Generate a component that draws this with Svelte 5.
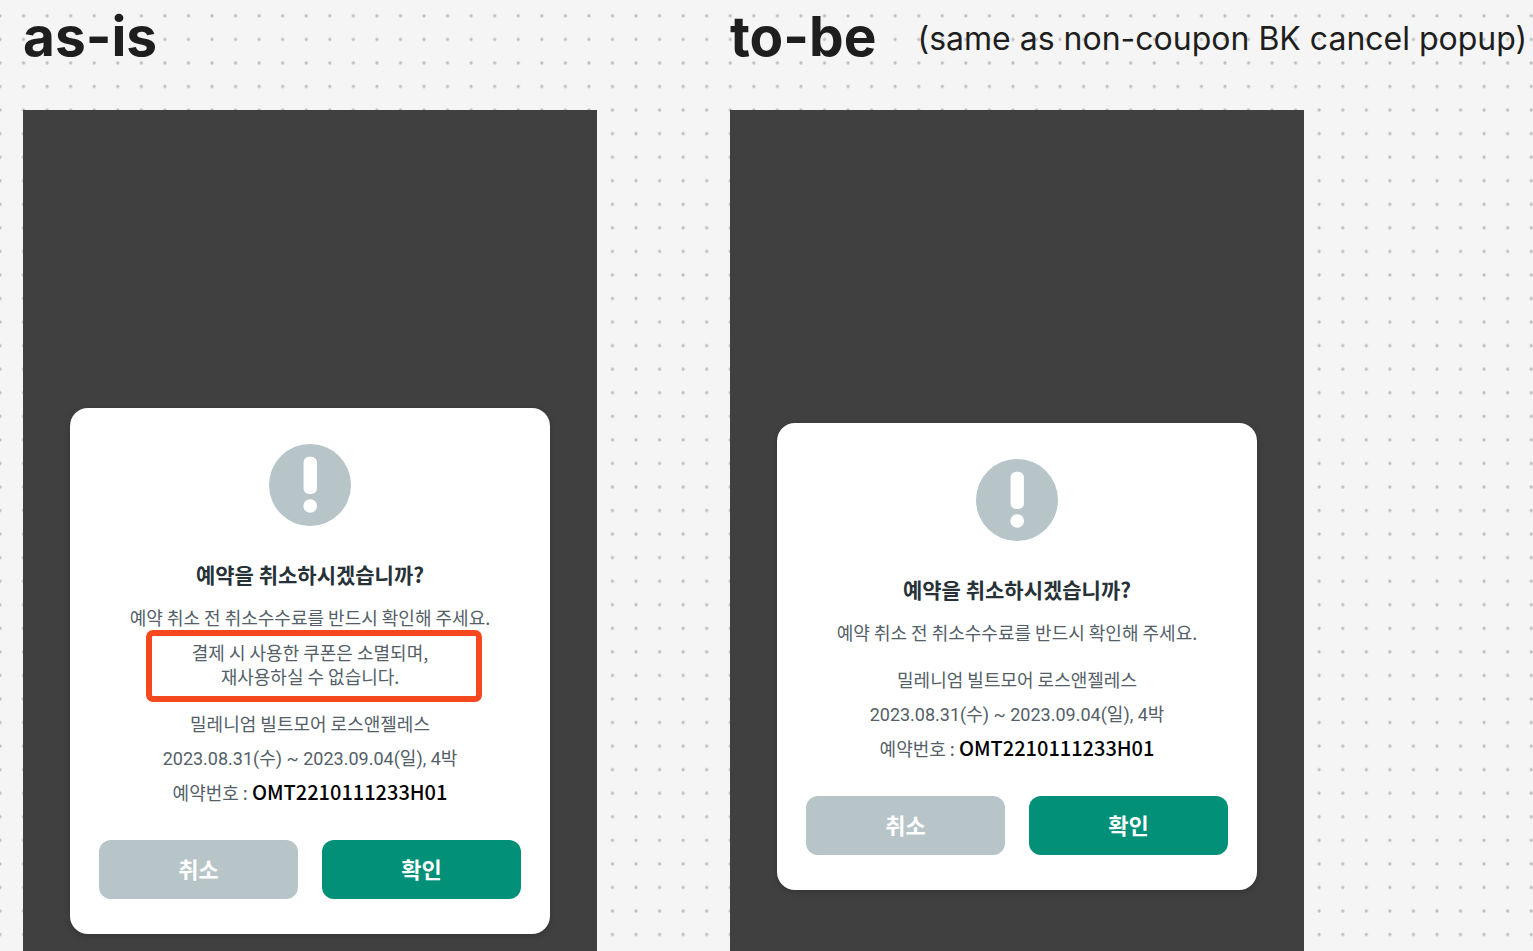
<script>
  const columns = [
    { id: 'as-is', title: 'as-is', note: '', coupon: true },
    { id: 'to-be', title: 'to-be', note: '(same as non-coupon BK cancel popup)', coupon: false },
  ];
</script>

<div class="board">
  <svg class="dots" aria-hidden="true">
    <defs>
      <pattern id="dot-grid" x="-11.78" y="4.05" width="23.557" height="23.557" patternUnits="userSpaceOnUse">
        <circle cx="11.78" cy="11.78" r="1.6" fill="#bdbdbd" />
      </pattern>
    </defs>
    <rect width="100%" height="100%" fill="url(#dot-grid)" />
  </svg>

  <main class="columns">
    {#each columns as col (col.id)}
      <section class="column" aria-labelledby={col.id}>
        <header>
          <h1 id={col.id}>{col.title}</h1>
          {#if col.note}<p class="note">{col.note}</p>{/if}
        </header>
        <div class="screen" class:tall={col.coupon}>
          <div class="dialog" role="alertdialog" aria-labelledby="{col.id}-question">
            <svg class="alert" viewBox="0 0 83 83" aria-hidden="true">
              <circle cx="41.5" cy="41.5" r="41.5" fill="#b7c4c8" />
              <rect x="35" y="13" width="13.5" height="37.5" rx="5.5" fill="#fff" />
              <circle cx="41.7" cy="62.7" r="6.9" fill="#fff" />
            </svg>
            <h2 id="{col.id}-question">예약을 취소하시겠습니까?</h2>
            <p class="desc">예약 취소 전 취소수수료를 반드시 확인해 주세요.</p>
            {#if col.coupon}
              <p class="coupon">결제 시 사용한 쿠폰은 소멸되며,<br />재사용하실 수 없습니다.<span class="marker"></span></p>
            {/if}
            <div class="booking">
              <p>밀레니엄 빌트모어 로스앤젤레스</p>
              <p class="dates">2023.08.31(수) ~ 2023.09.04(일), 4박</p>
              <p>예약번호 : <strong>OMT2210111233H01</strong></p>
            </div>
            <div class="actions">
              <button type="button" class="cancel">취소</button>
              <button type="button" class="confirm">확인</button>
            </div>
          </div>
        </div>
      </section>
    {/each}
  </main>
</div>

<style>
  :global(body) {
    margin: 0;
    background: #f5f5f5;
  }
  .board {
    position: relative;
    display: flex;
    min-height: 100vh;
    overflow: hidden;
    color: #1e1e1e;
    font-family: Inter, "Noto Sans CJK KR", sans-serif;
  }
  .dots {
    position: absolute;
    inset: 0;
    width: 100%;
    height: 100%;
  }
  .columns {
    position: relative;
    flex: 1;
    display: grid;
    grid-template-columns: repeat(2, minmax(0, 1fr));
    gap: 133px;
    padding: 0 229px 0 23px;
  }
  .column {
    display: flex;
    flex-direction: column;
  }
  header {
    display: flex;
    align-items: flex-start;
    gap: 41px;
    height: 76px;
    padding-bottom: 34px;
    white-space: nowrap;
  }
  h1,
  h2,
  p {
    margin: 0;
  }
  h1 {
    font-size: 55px;
    font-weight: 700;
    line-height: 72px;
  }
  .note {
    font-size: 32px;
    line-height: 78px;
  }
  .screen {
    flex: 1;
    padding: 313px 47px 17px;
    background: #404040;
  }
  .screen.tall {
    padding-top: 298px;
  }
  .dialog {
    display: flex;
    flex-direction: column;
    padding: 36px 29px 35px;
    border-radius: 18px;
    background: #fff;
    box-shadow: 0 2px 6px rgba(0, 0, 0, 0.2);
    color: #536068;
    font-family: "Noto Sans CJK KR", sans-serif;
    font-size: 18px;
    line-height: 24px;
    text-align: center;
  }
  .alert {
    align-self: center;
    width: 82px;
    height: 82px;
  }
  h2 {
    margin-top: 33px;
    color: #263238;
    font-size: 21px;
    font-weight: 700;
    line-height: 30px;
  }
  .desc {
    margin-top: 16px;
  }
  .coupon {
    position: relative;
    margin-top: 11px;
  }
  .marker {
    position: absolute;
    inset: -10px 39px -14px 47px;
    border: 6px solid #f6481f;
    border-radius: 7px;
  }
  .booking {
    display: grid;
    gap: 9px;
    margin-top: 23px;
  }
  .dates {
    padding-top: 3px;
    font-family: Roboto, "Noto Sans CJK KR", sans-serif;
  }
  strong {
    color: #000;
    font-size: 20px;
    font-weight: 500;
  }
  .actions {
    display: grid;
    grid-template-columns: 1fr 1fr;
    gap: 24px;
    margin-top: 36px;
  }
  button {
    height: 59px;
    padding: 0 0 4px;
    border: 0;
    border-radius: 12px;
    color: #fff;
    font-family: inherit;
    font-size: 22px;
    font-weight: 700;
    cursor: pointer;
  }
  .cancel {
    background: #b7c4c8;
  }
  .confirm {
    background: #029078;
  }
</style>
